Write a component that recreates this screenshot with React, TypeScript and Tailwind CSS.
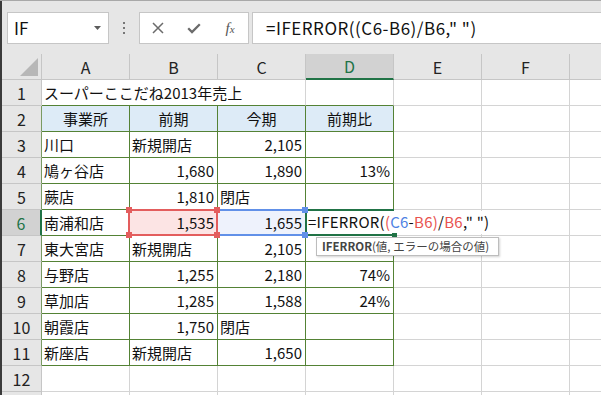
import React from 'react'

type Cell = { t?: string; al?: 'l' | 'r' | 'c'; fill?: string }

const cols = ['A', 'B', 'C', 'D', 'E', 'F', '']

const data: Cell[][] = [
  [],
  [
    { t: '事業所', al: 'c', fill: 'bg-[#ddebf7]' },
    { t: '前期', al: 'c', fill: 'bg-[#ddebf7]' },
    { t: '今期', al: 'c', fill: 'bg-[#ddebf7]' },
    { t: '前期比', al: 'c', fill: 'bg-[#ddebf7]' },
  ],
  [{ t: '川口' }, { t: '新規開店' }, { t: '2,105', al: 'r' }, {}],
  [{ t: '鳩ヶ谷店' }, { t: '1,680', al: 'r' }, { t: '1,890', al: 'r' }, { t: '13%', al: 'r' }],
  [{ t: '蕨店' }, { t: '1,810', al: 'r' }, { t: '閉店' }, {}],
  [{ t: '南浦和店' }, { t: '1,535', al: 'r', fill: 'bg-[#fce4e4]' }, { t: '1,655', al: 'r', fill: 'bg-[#eef2fc]' }, {}],
  [{ t: '東大宮店' }, { t: '新規開店' }, { t: '2,105', al: 'r' }, {}],
  [{ t: '与野店' }, { t: '1,255', al: 'r' }, { t: '2,180', al: 'r' }, { t: '74%', al: 'r' }],
  [{ t: '草加店' }, { t: '1,285', al: 'r' }, { t: '1,588', al: 'r' }, { t: '24%', al: 'r' }],
  [{ t: '朝霞店' }, { t: '1,750', al: 'r' }, { t: '閉店' }, {}],
  [{ t: '新座店' }, { t: '新規開店' }, { t: '1,650', al: 'r' }, {}],
  [],
  [],
]

function Formula() {
  return (
    <span className="absolute left-[1px] top-[1px] bottom-[1px] z-10 flex items-center whitespace-nowrap bg-white pl-[1px] pr-[2px] text-[15px] tracking-[0.25px] text-[#111]">
      =IFERROR(<span className="text-[#e8534f]">(</span>
      <span className="text-[#4f82e3]">C6</span>-<span className="text-[#e8534f]">B6)</span>/
      <span className="text-[#e8534f]">B6</span>," ")
    </span>
  )
}

function GridCell({ r, c, cell }: { r: number; c: number; cell?: Cell }) {
  const inTable = r >= 2 && r <= 11 && c <= 3
  const right = inTable ? 'border-r-[#548235]' : 'border-r-[#d4d4d4]'
  const bottom = (inTable || (r === 1 && c <= 3)) ? 'border-b-[#548235]' : 'border-b-[#d4d4d4]'
  const al = cell?.al === 'r' ? 'justify-end pr-[3px]' : cell?.al === 'c' ? 'justify-center' : 'justify-start pl-[2px]'
  return (
    <div
      className={`relative flex h-full w-[88px] shrink-0 items-center whitespace-nowrap border-r border-b pt-[1px] text-[15px] text-[#111] ${right} ${bottom} ${al} ${cell?.fill ?? 'bg-white'}`}
    >
      {cell?.t}
      {r === 6 && c === 3 && <Formula />}
    </div>
  )
}

function Row({ r }: { r: number }) {
  const sel = r === 6
  const hdrRight = sel
    ? 'border-r-2 border-r-[#217346]'
    : r >= 2 && r <= 11
    ? 'border-r border-r-[#7a9a62]'
    : 'border-r border-r-[#c6c6c6]'
  return (
    <div className="flex h-[26px]">
      <div
        className={`flex w-[40px] shrink-0 items-center justify-center border-b border-b-[#c6c6c6] pt-[1px] text-[16px] ${hdrRight} ${
          sel ? 'bg-[#d2d2d2] text-[#217346]' : 'bg-[#e6e6e6] text-[#222]'
        }`}
      >
        {r <= 12 ? r : ''}
      </div>
      {r === 1 ? (
        <>
          <div className="flex h-full w-[264px] shrink-0 items-center whitespace-nowrap border-r border-r-[#d4d4d4] border-b border-b-[#548235] pl-[2px] pt-[1px] text-[15px] text-[#111]">
            スーパーここだね2013年売上
          </div>
          {[3, 4, 5, 6].map((c) => (
            <GridCell key={c} r={r} c={c} />
          ))}
        </>
      ) : (
        cols.map((_, c) => <GridCell key={c} r={r} c={c} cell={data[r - 1]?.[c]} />)
      )}
    </div>
  )
}

export default function App() {
  return (
    <div className="relative h-[395px] w-[601px] overflow-hidden bg-white font-['Noto_Sans_CJK_JP',sans-serif]">
      <div className="h-px bg-[#a8a8a8]" />
      <div className="border-l-2 border-l-[#3b3b3b]">
        {/* formula bar */}
        <div className="flex h-[53px] items-start bg-[#e6e6e6] pt-[11px]">
          <div className="ml-[5px] flex h-[32px] w-[102px] items-center justify-between border border-[#c6c6c6] bg-white pl-[6px] pr-[7px] text-[17px] text-[#111]">
            <span>IF</span>
            <svg width="7" height="4" viewBox="0 0 7 4">
              <polygon points="0,0 7,0 3.5,4" fill="#5c5c5c" />
            </svg>
          </div>
          <div className="flex h-[32px] w-[30px] flex-col items-center justify-center gap-[3px]">
            <div className="h-[2px] w-[2px] bg-[#777]" />
            <div className="h-[2px] w-[2px] bg-[#777]" />
            <div className="h-[2px] w-[2px] bg-[#777]" />
          </div>
          <div className="flex h-[32px] w-[110px] items-center border border-[#c6c6c6] bg-white">
            <div className="flex w-[36px] justify-center">
              <svg width="12" height="12" viewBox="0 0 12 12">
                <path d="M1 1L11 11M11 1L1 11" stroke="#6b6b6b" strokeWidth="1.5" />
              </svg>
            </div>
            <div className="flex w-[36px] justify-center">
              <svg width="14" height="11" viewBox="0 0 14 11">
                <path d="M1.2 5.2L5 9L12.8 1.2" stroke="#6b6b6b" strokeWidth="2.3" fill="none" />
              </svg>
            </div>
            <div className="flex w-[36px] justify-center">
              <span className="font-['Liberation_Serif',serif] text-[15px] italic leading-none text-[#555]">
                f<span className="text-[11px]">x</span>
              </span>
            </div>
          </div>
          <div className="ml-[3px] flex h-[32px] flex-1 items-center border-y border-l border-[#c6c6c6] bg-white pl-[13px] text-[17px] tracking-[0.5px] text-[#111]">
            =IFERROR((C6-B6)/B6," ")
          </div>
        </div>

        {/* column headers */}
        <div className="flex h-[26px]">
          <div className="relative w-[40px] shrink-0 border-r border-b border-[#c6c6c6] bg-[#e6e6e6]">
            <svg className="absolute right-[3px] bottom-[3px]" width="18" height="18" viewBox="0 0 18 18">
              <polygon points="18,0 18,18 0,18" fill="#b7b7b7" />
            </svg>
          </div>
          {cols.map((h, i) => (
            <div
              key={i}
              className={`flex w-[88px] shrink-0 items-center justify-center border-r border-r-[#c6c6c6] text-[16px] ${
                h === 'D'
                  ? 'border-b-2 border-b-[#217346] bg-[#d2d2d2] text-[#217346]'
                  : 'border-b border-b-[#c6c6c6] bg-[#e6e6e6] text-[#222]'
              }`}
            >
              {h}
            </div>
          ))}
        </div>

        {Array.from({ length: 13 }, (_, i) => (
          <Row key={i} r={i + 1} />
        ))}
      </div>

      {/* active cell D6 */}
      <div className="absolute left-[305px] top-[209px] z-20 h-[27px] w-[2px] bg-[#217346]" />
      <div className="absolute left-[305px] top-[209px] z-20 h-[2px] w-[89px] bg-[#217346]" />
      <div className="absolute left-[305px] top-[234px] z-20 h-[2px] w-[89px] bg-[#217346]" />
      <div className="absolute left-[392px] top-[233px] z-20 h-[5px] w-[5px] bg-[#217346]" />

      {/* referenced range C6 */}
      <div className="absolute left-[218px] top-[209px] z-20 h-[2px] w-[88px] bg-[#6190e8]" />
      <div className="absolute left-[218px] top-[234px] z-20 h-[2px] w-[88px] bg-[#6190e8]" />
      <div className="absolute left-[302px] top-[207px] z-30 h-[6px] w-[6px] bg-[#6190e8]" />
      <div className="absolute left-[302px] top-[232px] z-30 h-[6px] w-[6px] bg-[#6190e8]" />

      {/* referenced range B6 */}
      <div className="absolute left-[128px] top-[209px] z-20 h-[27px] w-[90px] border-2 border-[#e35d5d]" />
      <div className="absolute left-[126px] top-[207px] z-30 h-[6px] w-[6px] bg-[#e35d5d]" />
      <div className="absolute left-[214px] top-[207px] z-30 h-[6px] w-[6px] bg-[#e35d5d]" />
      <div className="absolute left-[126px] top-[232px] z-30 h-[6px] w-[6px] bg-[#e35d5d]" />
      <div className="absolute left-[214px] top-[232px] z-30 h-[6px] w-[6px] bg-[#e35d5d]" />

      {/* function tooltip */}
      <div className="absolute left-[316px] top-[237px] z-40 flex h-[19px] w-[183px] items-center whitespace-nowrap border border-[#bdbdbd] bg-white pl-[5px] text-[11.5px] text-[#444] shadow-[1px_1px_2px_rgba(0,0,0,0.18)]">
        <span className="font-bold">IFERROR</span>(値, エラーの場合の値)
      </div>
    </div>
  )
}
